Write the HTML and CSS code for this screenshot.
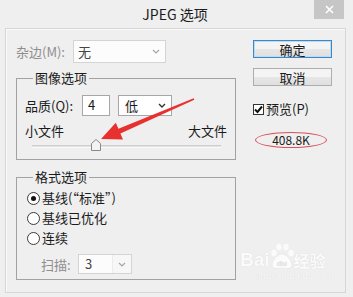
FILE: index.html
```html
<!DOCTYPE html>
<html lang="zh-CN">
<head>
    <meta charset="UTF-8">
    <title>JPEG 选项</title>
    <link rel="stylesheet" href="styles.css">
</head>
<body>
    <div class="titlebar">
        <span class="title">JPEG 选项</span>
        <span class="close">
            <svg width="9" height="9" viewBox="0 0 9 9"><path d="M1 1L8 8M8 1L1 8" stroke="#fff" stroke-width="1.6"/></svg>
        </span>
    </div>

    <div class="panel">
        <div class="left-col">
            <div class="row matte-row">
                <span class="matte-label disabled">杂边(M):</span>
                <div class="combo combo-matte is-disabled">
                    <span class="combo-text">无</span>
                    <span class="chev"><svg width="8" height="5" viewBox="0 0 8 5"><path d="M1 1L4 4L7 1" fill="none" stroke="currentColor" stroke-width="1.2"/></svg></span>
                </div>
            </div>

            <fieldset class="group group-image">
                <legend>图像选项</legend>
                <div class="row quality-row">
                    <span class="quality-label">品质(Q):</span>
                    <div class="field">4</div>
                    <div class="combo combo-level">
                        <span class="combo-text">低</span>
                        <span class="chev"><svg width="8" height="5" viewBox="0 0 8 5"><path d="M1 1L4 4L7 1" fill="none" stroke="currentColor" stroke-width="1.4"/></svg></span>
                    </div>
                </div>
                <div class="size-labels">
                    <span>小文件</span>
                    <span>大文件</span>
                </div>
                <div class="slider">
                    <div class="track"></div>
                    <svg class="thumb" style="left: 59px" width="10" height="12" viewBox="0 0 10 12">
                        <path d="M0.5 11.5V4.5L5 0.5L9.5 4.5V11.5Z" fill="#f3f3f3" stroke="#8a8a8a"/>
                    </svg>
                </div>
            </fieldset>

            <fieldset class="group group-format">
                <legend>格式选项</legend>
                <div class="radio checked"><span class="radio-dot"></span>基线(“标准”)</div>
                <div class="radio"><span class="radio-dot"></span>基线已优化</div>
                <div class="radio"><span class="radio-dot"></span>连续</div>
                <div class="row scans-row">
                    <span class="scans-label disabled">扫描:</span>
                    <div class="combo combo-scans is-disabled">
                        <span class="combo-text">3</span>
                        <span class="chev"><svg width="8" height="5" viewBox="0 0 8 5"><path d="M1 1L4 4L7 1" fill="none" stroke="currentColor" stroke-width="1.2"/></svg></span>
                    </div>
                </div>
            </fieldset>
        </div>

        <div class="right-col">
            <button class="btn btn-default">确定</button>
            <button class="btn">取消</button>
            <div class="check">
                <span class="check-box"><svg width="9" height="9" viewBox="0 0 9 9"><path d="M1 4.5L3.5 7L8 1.5" fill="none" stroke="#111" stroke-width="2"/></svg></span>
                预览(P)
            </div>
            <div class="filesize">408.8K</div>
        </div>
    </div>

    <!-- annotation drawn over the dialog -->
    <svg class="arrow" width="353" height="297" viewBox="0 0 353 297">
        <polygon points="101,139 123,139.4 120.4,133.4 194.3,99.7 193.7,98.3 118.4,128.8 115.8,122.8" fill="#e8302f"/>
    </svg>

    <div class="watermark">
        <div class="wm-logo">
            <span class="wm-bai">Bai</span>
            <svg class="wm-paw" width="24" height="28" viewBox="0 0 24 28">
                <ellipse cx="4" cy="11" rx="2.6" ry="3.2" fill="#fbfbfb"/>
                <ellipse cx="9" cy="5" rx="2.6" ry="3.2" fill="#fbfbfb"/>
                <ellipse cx="16" cy="5" rx="2.6" ry="3.2" fill="#fbfbfb"/>
                <ellipse cx="21" cy="11" rx="2.6" ry="3.2" fill="#fbfbfb"/>
                <path d="M12 12C7 12 2 19 2 23C2 27 7 27 12 26C17 27 22 27 22 23C22 19 17 12 12 12Z" fill="#fbfbfb" stroke="#e0e0e0" stroke-width="0.6"/>
                <text x="12" y="24" text-anchor="middle" font-size="8" font-family="Liberation Sans, sans-serif" font-weight="bold" fill="#e4e4e4">du</text>
            </svg>
            <span class="wm-jy">经验</span>
        </div>
        <div class="wm-url">jingyan.baidu.com</div>
    </div>
</body>
</html>
```

FILE: styles.css
```css
body {
    margin: 0;
    width: 353px;
    height: 297px;
    position: relative;
    overflow: hidden;
    background-color: #efefef;
    font-family: "Noto Sans CJK SC", "Noto Sans", sans-serif;
    font-size: 13px;
    color: #1b1b1b;
}

.disabled {
    color: #8e8e8e;
}

/* window title */
.titlebar {
    position: relative;
    height: 28px;
    display: flex;
    justify-content: center;
    align-items: center;
}

.title {
    font-size: 14px;
    line-height: 28px;
    margin-left: -3px;
}

.close {
    position: absolute;
    top: 0;
    right: 9px;
    width: 30px;
    height: 19px;
    background-color: #c6c6c6;
    display: flex;
    align-items: center;
    justify-content: center;
}

/* main panel */
.panel {
    box-sizing: border-box;
    display: flex;
    margin-left: 5px;
    width: 341px;
    height: 265px;
    padding: 11px 0 0 10px;
    border: 1px solid #d6d6d6;
    box-shadow: inset 1px 1px 0 #fafafa;
}

.left-col {
    width: 220px;
}

.right-col {
    width: 79px;
    margin-left: 17px;
    display: flex;
    flex-direction: column;
}

.row {
    display: flex;
    align-items: center;
}

.matte-row {
    height: 23px;
}

.matte-label {
    width: 57px;
}

/* combo boxes */
.combo {
    box-sizing: border-box;
    display: flex;
    align-items: center;
    border: 1px solid #a7a7a7;
    background-color: #fff;
    padding-left: 5px;
}

.combo-text {
    flex: 1;
    line-height: 16px;
}

.chev {
    width: 18px;
    height: 100%;
    display: flex;
    align-items: center;
    justify-content: center;
    color: #333;
}

.combo.is-disabled {
    border-color: #d4d4d4;
    background-color: #fcfcfc;
    color: #444;
}

.combo.is-disabled .chev {
    color: #a5a5a5;
}

.combo-matte {
    width: 93px;
    height: 23px;
    padding-left: 4px;
}

.combo-level {
    width: 54px;
    height: 21px;
    padding-left: 6px;
}

.combo-scans {
    width: 54px;
    height: 20px;
    padding-left: 6px;
}

.combo-scans .chev {
    border-left: 1px solid #ececec;
    background-color: #f7f7f7;
}

/* group boxes */
.group {
    margin: 0;
    padding: 0 8px;
    border: 1px solid #a2a2a2;
    min-width: 0;
}

.group legend {
    margin-left: 8px;
    padding: 0 2px;
    line-height: 16px;
}

.group-image {
    margin-top: 7px;
    padding-bottom: 8px;
}

.quality-row {
    margin-top: 9px;
    height: 21px;
}

.quality-label {
    width: 57px;
}

.field {
    box-sizing: border-box;
    width: 28px;
    height: 21px;
    margin-right: 8px;
    padding-left: 5px;
    border: 1px solid #a7a7a7;
    background-color: #fff;
    line-height: 18px;
}

.size-labels {
    display: flex;
    justify-content: space-between;
    margin-top: 7px;
    line-height: 16px;
}

.slider {
    position: relative;
    height: 12px;
    margin: 0 6px 0 7px;
}

.track {
    position: absolute;
    left: 0;
    right: 0;
    top: 6px;
    height: 1px;
    border-top: 1px solid #cfcfcf;
    border-bottom: 1px solid #fafafa;
    background-color: #e2e2e2;
}

.thumb {
    position: absolute;
    top: 0;
}

.group-format {
    margin-top: 9px;
    padding-bottom: 5px;
}

.radio {
    display: flex;
    align-items: center;
    height: 20px;
    line-height: 16px;
}

.radio:first-of-type {
    margin-top: 3px;
}

.radio-dot {
    box-sizing: border-box;
    width: 13px;
    height: 13px;
    margin: 0 2px 0 2px;
    border: 1px solid #3a3a3a;
    border-radius: 50%;
    background-color: #fff;
    display: flex;
    align-items: center;
    justify-content: center;
}

.radio.checked .radio-dot::after {
    content: "";
    width: 5px;
    height: 5px;
    border-radius: 50%;
    background-color: #111;
}

.scans-row {
    margin-top: 6px;
    padding-left: 16px;
    height: 20px;
}

.scans-label {
    width: 37px;
}

/* buttons */
.btn {
    box-sizing: border-box;
    width: 79px;
    height: 18px;
    padding: 0;
    font-family: inherit;
    font-size: 13px;
    line-height: 15px;
    color: #1b1b1b;
    border: 1px solid #adadad;
    background: linear-gradient(#f4f4f4, #f4f4f4 50%, #e6e6e6 51%, #e0e0e0);
}

.btn + .btn {
    margin-top: 10px;
}

.btn-default {
    border-color: #3f86c6;
    box-shadow: inset 0 0 0 1px #b9dcf5;
}

.check {
    display: flex;
    align-items: center;
    margin-top: 13px;
    height: 20px;
    line-height: 16px;
}

.check-box {
    box-sizing: border-box;
    width: 11px;
    height: 11px;
    margin-right: 2px;
    border: 1px solid #333;
    background-color: #fff;
    display: flex;
    align-items: center;
    justify-content: center;
}

.filesize {
    box-sizing: border-box;
    width: 72px;
    height: 16px;
    margin: 13px 0 0 2px;
    border: 1px solid #d8505a;
    border-radius: 50%;
    text-align: center;
    font-size: 12px;
    line-height: 14px;
}

/* overlays */
.arrow {
    position: absolute;
    left: 0;
    top: 0;
    pointer-events: none;
}

.watermark {
    position: absolute;
    left: 240px;
    top: 242px;
    color: #fbfbfb;
    text-shadow: 0 0 1px rgba(0, 0, 0, 0.12);
}

.wm-logo {
    display: flex;
    align-items: flex-end;
}

.wm-bai {
    font-family: "Liberation Sans", sans-serif;
    font-size: 19px;
    font-weight: bold;
    line-height: 20px;
}

.wm-jy {
    font-size: 16px;
    line-height: 20px;
    font-weight: bold;
}

.wm-url {
    margin: 1px 0 0 16px;
    font-family: "Liberation Sans", sans-serif;
    font-size: 9px;
    line-height: 10px;
    letter-spacing: 0.3px;
}
```
